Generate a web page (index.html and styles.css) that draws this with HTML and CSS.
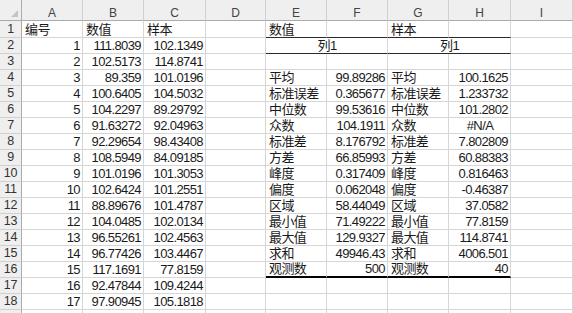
FILE: index.html
```html
<!DOCTYPE html>
<html lang="zh">
<head>
<meta charset="utf-8">
<title>Sheet</title>
<link rel="stylesheet" href="styles.css">
</head>
<body>
<div class="sheet">
  <div class="corner"><span class="tri"></span></div>
  <div class="ch">A</div><div class="ch">B</div><div class="ch">C</div><div class="ch">D</div><div class="ch">E</div><div class="ch">F</div><div class="ch">G</div><div class="ch">H</div><div class="ch">I</div>

  <div class="rh">1</div><div class="c">编号</div><div class="c">数值</div><div class="c">样本</div><div class="c"></div><div class="c b1">数值</div><div class="c b1"></div><div class="c b1">样本</div><div class="c b1"></div><div class="c"></div>

  <div class="rh">2</div><div class="c r">1</div><div class="c r">111.8039</div><div class="c r">102.1349</div><div class="c"></div><div class="c m b1 ctr">列1</div><div class="c m b1 ctr">列1</div><div class="c"></div>

  <div class="rh">3</div><div class="c r">2</div><div class="c r">102.5173</div><div class="c r">114.8741</div><div class="c"></div><div class="c"></div><div class="c"></div><div class="c"></div><div class="c"></div><div class="c"></div>

  <div class="rh">4</div><div class="c r">3</div><div class="c r">89.359</div><div class="c r">101.0196</div><div class="c"></div><div class="c">平均</div><div class="c r">99.89286</div><div class="c">平均</div><div class="c r">100.1625</div><div class="c"></div>

  <div class="rh">5</div><div class="c r">4</div><div class="c r">100.6405</div><div class="c r">104.5032</div><div class="c"></div><div class="c">标准误差</div><div class="c r">0.365677</div><div class="c">标准误差</div><div class="c r">1.233732</div><div class="c"></div>

  <div class="rh">6</div><div class="c r">5</div><div class="c r">104.2297</div><div class="c r">89.29792</div><div class="c"></div><div class="c">中位数</div><div class="c r">99.53616</div><div class="c">中位数</div><div class="c r">101.2802</div><div class="c"></div>

  <div class="rh">7</div><div class="c r">6</div><div class="c r">91.63272</div><div class="c r">92.04963</div><div class="c"></div><div class="c">众数</div><div class="c r">104.1911</div><div class="c">众数</div><div class="c ctr">#N/A</div><div class="c"></div>

  <div class="rh">8</div><div class="c r">7</div><div class="c r">92.29654</div><div class="c r">98.43408</div><div class="c"></div><div class="c">标准差</div><div class="c r">8.176792</div><div class="c">标准差</div><div class="c r">7.802809</div><div class="c"></div>

  <div class="rh">9</div><div class="c r">8</div><div class="c r">108.5949</div><div class="c r">84.09185</div><div class="c"></div><div class="c">方差</div><div class="c r">66.85993</div><div class="c">方差</div><div class="c r">60.88383</div><div class="c"></div>

  <div class="rh">10</div><div class="c r">9</div><div class="c r">101.0196</div><div class="c r">101.3053</div><div class="c"></div><div class="c">峰度</div><div class="c r">0.317409</div><div class="c">峰度</div><div class="c r">0.816463</div><div class="c"></div>

  <div class="rh">11</div><div class="c r">10</div><div class="c r">102.6424</div><div class="c r">101.2551</div><div class="c"></div><div class="c">偏度</div><div class="c r">0.062048</div><div class="c">偏度</div><div class="c r">-0.46387</div><div class="c"></div>

  <div class="rh">12</div><div class="c r">11</div><div class="c r">88.89676</div><div class="c r">101.4787</div><div class="c"></div><div class="c">区域</div><div class="c r">58.44049</div><div class="c">区域</div><div class="c r">37.0582</div><div class="c"></div>

  <div class="rh">13</div><div class="c r">12</div><div class="c r">104.0485</div><div class="c r">102.0134</div><div class="c"></div><div class="c">最小值</div><div class="c r">71.49222</div><div class="c">最小值</div><div class="c r">77.8159</div><div class="c"></div>

  <div class="rh">14</div><div class="c r">13</div><div class="c r">96.55261</div><div class="c r">102.4563</div><div class="c"></div><div class="c">最大值</div><div class="c r">129.9327</div><div class="c">最大值</div><div class="c r">114.8741</div><div class="c"></div>

  <div class="rh">15</div><div class="c r">14</div><div class="c r">96.77426</div><div class="c r">103.4467</div><div class="c"></div><div class="c">求和</div><div class="c r">49946.43</div><div class="c">求和</div><div class="c r">4006.501</div><div class="c"></div>

  <div class="rh">16</div><div class="c r">15</div><div class="c r">117.1691</div><div class="c r">77.8159</div><div class="c"></div><div class="c b2">观测数</div><div class="c r b2">500</div><div class="c b2">观测数</div><div class="c r b2">40</div><div class="c"></div>

  <div class="rh">17</div><div class="c r">16</div><div class="c r">92.47844</div><div class="c r">109.4244</div><div class="c"></div><div class="c"></div><div class="c"></div><div class="c"></div><div class="c"></div><div class="c"></div>

  <div class="rh">18</div><div class="c r">17</div><div class="c r">97.90945</div><div class="c r">105.1818</div><div class="c"></div><div class="c"></div><div class="c"></div><div class="c"></div><div class="c"></div><div class="c"></div>

  <div class="rh"></div><div class="c"></div><div class="c"></div><div class="c"></div><div class="c"></div><div class="c"></div><div class="c"></div><div class="c"></div><div class="c"></div><div class="c"></div>
</div>
</body>
</html>
```
FILE: styles.css
```css
html, body {
  margin: 0;
  padding: 0;
  background: #ffffff;
  overflow: hidden;
}

.sheet {
  display: grid;
  grid-template-columns: 22px 61px 61px 62px 60px 61px 61px 61px 62px 62px;
  grid-template-rows: 21px 17px repeat(17, 16px) 16px;
  font-family: "Liberation Sans", "Noto Sans CJK SC", sans-serif;
  font-size: 13px;
  letter-spacing: -0.6px;
  color: #1a1a1a;
  width: 573px;
}

.corner {
  position: relative;
  background: #efefef;
  border-right: 1px solid #ababab;
  border-bottom: 1px solid #ababab;
  box-sizing: border-box;
}

.tri {
  position: absolute;
  right: 3px;
  bottom: 3px;
  width: 0;
  height: 0;
  border-left: 7px solid transparent;
  border-bottom: 7px solid #c4c4c4;
}

.ch {
  background: #efefef;
  border-right: 1px solid #d0d0d0;
  border-bottom: 1px solid #ababab;
  box-sizing: border-box;
  text-align: center;
  font-size: 12px;
  letter-spacing: 0;
  color: #444;
  line-height: 14px;
  padding-top: 6px;
}

.rh {
  background: #efefef;
  border-right: 1px solid #ababab;
  border-bottom: 1px solid #d0d0d0;
  box-sizing: border-box;
  text-align: center;
  font-size: 12.5px;
  letter-spacing: -0.3px;
  color: #333;
  display: flex;
  align-items: flex-end;
  justify-content: center;
  padding-bottom: 1px;
  line-height: 14px;
}

.c {
  border-right: 1px solid #d6d6d6;
  border-bottom: 1px solid #d6d6d6;
  box-sizing: border-box;
  padding: 0 2px 0 3px;
  white-space: nowrap;
  overflow: hidden;
  display: flex;
  align-items: flex-end;
  line-height: 15px;
}

.r {
  justify-content: flex-end;
}

.ctr {
  justify-content: center;
}

.m {
  grid-column: span 2;
}

.b1 {
  border-bottom: 1px solid #2a2a2a;
}

.b2 {
  border-bottom: 2px solid #000000;
}
```
